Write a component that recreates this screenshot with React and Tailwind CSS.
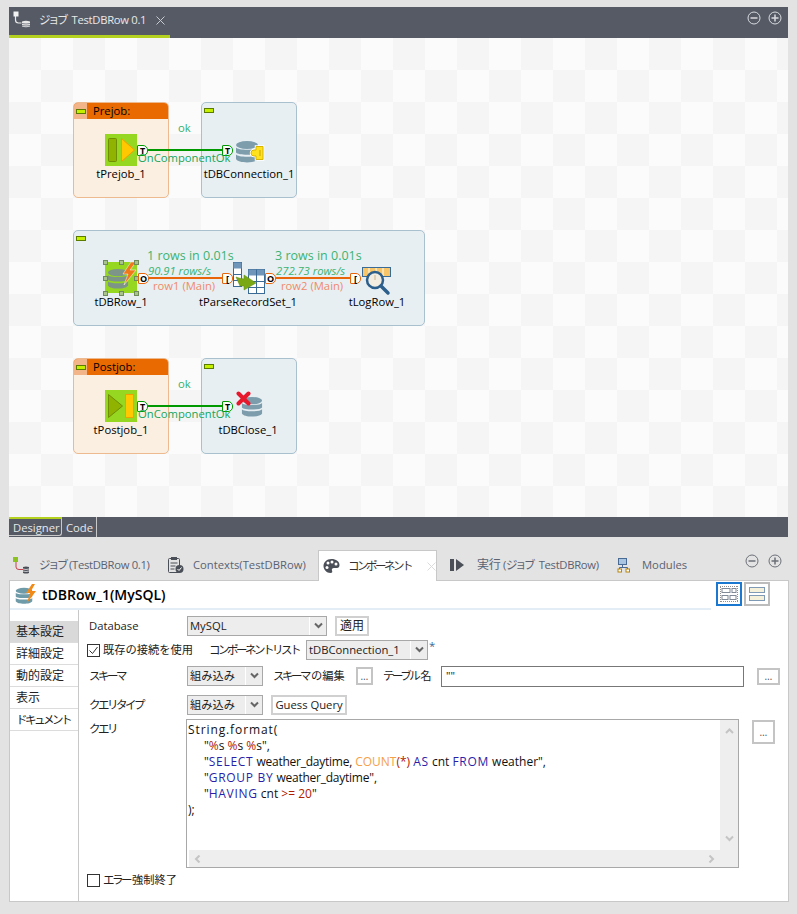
const sans = 'font-["Open_Sans","Noto_Sans_CJK_JP",sans-serif]';

// Meiryo UI kana are condensed; Noto needs tightening to take the same width
function Kana({ children }) {
  return <span className="text-[11.5px] tracking-[-2.5px] mr-[2px]">{children}</span>;
}

function KanaTight({ children }) {
  return <span className="text-[11.5px] tracking-[-2.5px] mr-[3px]">{children}</span>;
}

function JobIcon() {
  return (
    <svg width="18" height="18" viewBox="0 0 18 18" className="block">
      <path d="M2.500 4v5q0 3 3 3h3" fill="none" stroke="#e8e8e8" strokeWidth="1.200" />
      <rect x=".5" y=".5" width="5" height="5" fill="#f2f2f2" />
      <path d="M9 10.500q4-1.500 8 0v5q-4 1.500-8 0z" fill="#e8e8e8" />
      <path d="M9 12.500q4 1 8 0M9 14.500q4 1 8 0" fill="none" stroke="#555a65" strokeWidth=".7" />
    </svg>
  );
}

function JobIconLight() {
  return (
    <svg width="17" height="17" viewBox="0 0 17 17" className="block">
      <path d="M3 4v6q0 2.500 3 2.500h4" fill="none" stroke="#c9414f" strokeWidth="1" />
      <rect x="0" y="0" width="5" height="5" fill="#8cc21f" />
      <path d="M10 10q3-1 6 0v6q-3 1-6 0z" fill="#4b4f57" />
      <path d="M10 12q3 1 6 0M10 14q3 1 6 0" fill="none" stroke="#fff" strokeWidth=".7" />
    </svg>
  );
}

function CircleBtn({ plus, dark }) {
  const c = dark ? '#d8dade' : '#6b7078';
  return (
    <svg width="14" height="14" viewBox="0 0 14 14" className="block">
      <circle cx="7" cy="7" r="6" fill="none" stroke={c} />
      <path d={plus ? 'M3.500 7h7M7 3.500v7' : 'M3.500 7h7'} stroke={c} strokeWidth="1.500" />
    </svg>
  );
}

function Chevron({ color = '#666666', dir = 'down' }) {
  const d = { down: 'M1 1.500l3.500 3.500 3.500-3.500', up: 'M1 5l3.500-3.500 3.500 3.500', left: 'M5.500 .5l-3.500 3.500 3.500 3.500', right: 'M2.500 .5l3.500 3.500-3.500 3.500' }[dir];
  return (
    <svg width="9" height="8" viewBox="0 0 9 8" className="block">
      <path d={d} fill="none" stroke={color} strokeWidth="2" />
    </svg>
  );
}

function Collapse() {
  return <div className="w-[10px] h-[5px] bg-[#c4f000] border border-[#5b7a00]" />;
}

function Subjob({ cls, title }) {
  return (
    <div className={`absolute w-[96px] h-[96px] rounded-[5px] border border-[#edb98e] bg-[#fbeee0]/95 overflow-hidden ${cls}`}>
      <div className="flex h-[16px] bg-[#e86a00]">
        <div className="w-[13px] bg-[#f2b58a] flex items-center justify-center"><Collapse /></div>
        <span className="pl-[6px] text-[11.25px] leading-[15px] text-black">{title}</span>
      </div>
    </div>
  );
}

function Plain({ cls }) {
  return (
    <div className={`absolute rounded-[5px] border border-[#a9c1ce] bg-[#e6eef2]/95 pl-[2px] pt-[5px] ${cls}`}>
      <Collapse />
    </div>
  );
}

function Port({ cls, kind, color }) {
  const glyph = kind === 'T' ? 'T' : kind === 'O' ? 'O' : '[';
  return (
    <div className={`absolute w-[11px] h-[11px] bg-white border rounded-r-[5px] rounded-l-[1px] flex items-center justify-center text-[9px] leading-none font-bold text-black ${color} ${cls}`}>
      {glyph}
    </div>
  );
}

function Db({ size = 24, color = '#7d9dad' }) {
  return (
    <svg width={size} height={size} viewBox="0 0 24 24" className="block">
      <ellipse cx="12" cy="5" rx="11" ry="4" fill={color} />
      <path d="M1 7.500c2 3 20 3 22 0v5c-2 3-20 3-22 0z" fill={color} />
      <path d="M1 14.500c2 3 20 3 22 0V19c-2 4.500-20 4.500-22 0z" fill={color} />
    </svg>
  );
}

function Handle({ cls }) {
  return <div className={`absolute w-[5px] h-[5px] bg-[#a8c48c] border border-[#6f8a5c] ${cls}`} />;
}

function Canvas() {
  return (
    <div className={`relative flex-1 overflow-hidden bg-[conic-gradient(#f5f5f5_25%,#fbfbfb_0_50%,#f5f5f5_0_75%,#fbfbfb_0)] bg-[length:64px_64px] bg-[position:-32px_0] text-[11.25px] leading-[16px] ${sans}`}>
      {/* prejob */}
      <Subjob cls="left-[64px] top-[64px]" title="Prejob:" />
      <Plain cls="left-[192px] top-[64px] w-[96px] h-[96px]" />
      <div className="absolute left-[96px] top-[96px] w-[32px] h-[32px] bg-[#96d722]">
        <svg width="32" height="32" viewBox="0 0 32 32" className="block">
          <rect x="3.500" y="4.500" width="8" height="23" rx="1" fill="#8fb300" stroke="#6f8f00" />
          <path d="M16.500 4.500v23L29.500 16z" fill="#ffc800" stroke="#f0a000" />
        </svg>
      </div>
      <div className="absolute left-[139px] top-[111px] w-[75px] h-[2px] bg-[#009a00]" />
      <Port cls="left-[128px] top-[107px]" kind="T" color="border-[#009a00]" />
      <Port cls="left-[213px] top-[107px]" kind="T" color="border-[#009a00]" />
      <div className="absolute left-[226px] top-[102px]"><Db /></div>
      <svg width="18" height="16" viewBox="0 0 18 16" className="absolute left-[238px] top-[107px]">
        <path d="M7 5h2V1.500h7V14.500H9V11H7a3 3 0 0 1 0-6z" fill="#ffe11e" stroke="#fff" strokeWidth="2.500" />
        <path d="M7 5h2V1.500h7V14.500H9V11H7a3 3 0 0 1 0-6z" fill="#ffe11e" stroke="#d8b400" />
        <path d="M13 5v6" stroke="#c9a400" />
      </svg>
      <span className="absolute left-[169px] top-[82px] text-[#35b06b]">ok</span>
      <span className="absolute left-[129px] top-[112px] text-[#16a55a]">OnComponentOk</span>
      <span className="absolute left-[82px] top-[128px] w-[60px] text-center text-black">tPrejob_1</span>
      <span className="absolute left-[190px] top-[128px] w-[100px] text-center text-black">tDBConnection_1</span>

      {/* main subjob */}
      <Plain cls="left-[64px] top-[192px] w-[352px] h-[96px]" />
      <div className="absolute left-[96px] top-[224px] w-[32px] h-[31px] bg-[#96d722]" />
      <div className="absolute left-[98px] top-[230px]"><Db size={22} color="#7d9588" /></div>
      <svg width="16" height="24" viewBox="0 0 16 24" className="absolute left-[113px] top-[224px]">
        <path d="M9 0L1 12h5l-4 11 12-15H8l6-8z" fill="#f07818" stroke="#fff" strokeWidth=".5" />
      </svg>
      <Handle cls="left-[94px] top-[222px]" />
      <Handle cls="left-[110px] top-[222px]" />
      <Handle cls="left-[125px] top-[222px]" />
      <Handle cls="left-[94px] top-[238px]" />
      <Handle cls="left-[125px] top-[238px]" />
      <Handle cls="left-[94px] top-[253px]" />
      <Handle cls="left-[110px] top-[253px]" />
      <Handle cls="left-[125px] top-[253px]" />
      <div className="absolute left-[140px] top-[239px] w-[74px] h-[2px] bg-[#e8650a]" />
      <div className="absolute left-[267px] top-[239px] w-[74px] h-[2px] bg-[#e8650a]" />
      <Port cls="left-[129px] top-[235px]" kind="O" color="border-[#e8650a]" />
      <Port cls="left-[213px] top-[235px]" kind="[" color="border-[#e8650a]" />
      <Port cls="left-[256px] top-[235px]" kind="O" color="border-[#e8650a]" />
      <Port cls="left-[341px] top-[235px]" kind="[" color="border-[#e8650a]" />
      <svg width="34" height="34" viewBox="0 0 34 34" className="absolute left-[224px] top-[224px]">
        <rect x=".5" y=".5" width="8" height="24" fill="#fff" stroke="#3a6a96" />
        <rect x=".5" y=".5" width="8" height="6" fill="#6f96b8" />
        <path d="M.5 12.500h8M.5 18.500h8" stroke="#3a6a96" />
        <rect x="15.500" y="7.500" width="16" height="24" fill="#fff" stroke="#3a6a96" />
        <rect x="15.500" y="7.500" width="16" height="6" fill="#6f96b8" />
        <path d="M15.500 19.500h16M15.500 25.500h16M23.500 7.500v24" stroke="#3a6a96" />
        <path d="M3 15l3 1 5 1v-4l12 8-12 7v-4H7z" fill="#7aa815" stroke="#5d8a10" strokeWidth=".5" />
      </svg>
      <svg width="32" height="30" viewBox="0 0 32 30" className="absolute left-[353px] top-[229px]">
        <rect x=".5" y=".5" width="28" height="9" fill="#f8c668" stroke="#3a6a96" />
        <path d="M7 1v8M14 1v8M21 1v8" stroke="#fff" />
        <circle cx="13" cy="13" r="8" fill="#f3ece0" stroke="#2c5f8c" strokeWidth="2.500" />
        <path d="M13 8v5" stroke="#d9c8a8" strokeWidth="1.500" />
        <path d="M19 19l7 7" stroke="#2c5f8c" strokeWidth="3.500" strokeLinecap="round" />
      </svg>
      <span className="absolute left-[138px] top-[210px] text-[12.5px] text-[#3cb371]">1 rows in 0.01s</span>
      <span className="absolute left-[139px] top-[225px] italic text-[#3cb371]">90.91 rows/s</span>
      <span className="absolute left-[144px] top-[240px] text-[#f08a6a]">row1 (Main)</span>
      <span className="absolute left-[266px] top-[210px] text-[12.5px] text-[#3cb371]">3 rows in 0.01s</span>
      <span className="absolute left-[267px] top-[225px] italic text-[#3cb371]">272.73 rows/s</span>
      <span className="absolute left-[272px] top-[240px] text-[#f08a6a]">row2 (Main)</span>
      <span className="absolute left-[82px] top-[256px] w-[60px] text-center text-black">tDBRow_1</span>
      <span className="absolute left-[179px] top-[256px] w-[120px] text-center text-black">tParseRecordSet_1</span>
      <span className="absolute left-[328px] top-[256px] w-[80px] text-center text-black">tLogRow_1</span>

      {/* postjob */}
      <Subjob cls="left-[64px] top-[320px]" title="Postjob:" />
      <Plain cls="left-[192px] top-[320px] w-[96px] h-[96px]" />
      <div className="absolute left-[96px] top-[352px] w-[32px] h-[32px] bg-[#96d722]">
        <svg width="32" height="32" viewBox="0 0 32 32" className="block">
          <path d="M3.500 4.500v23L17.500 16z" fill="#8fb300" stroke="#6f8f00" />
          <rect x="20.500" y="4.500" width="8" height="23" fill="#ffc800" stroke="#f0a000" />
        </svg>
      </div>
      <div className="absolute left-[139px] top-[367px] w-[75px] h-[2px] bg-[#009a00]" />
      <Port cls="left-[128px] top-[363px]" kind="T" color="border-[#009a00]" />
      <Port cls="left-[213px] top-[363px]" kind="T" color="border-[#009a00]" />
      <div className="absolute left-[232px] top-[358px]"><Db size={22} /></div>
      <svg width="15" height="15" viewBox="0 0 15 15" className="absolute left-[227px] top-[353px]">
        <path d="M2.500 2.500l10 10M12.500 2.500l-10 10" stroke="#e8182c" strokeWidth="4" strokeLinecap="round" />
      </svg>
      <span className="absolute left-[169px] top-[338px] text-[#35b06b]">ok</span>
      <span className="absolute left-[129px] top-[368px] text-[#16a55a]">OnComponentOk</span>
      <span className="absolute left-[82px] top-[384px] w-[60px] text-center text-black">tPostjob_1</span>
      <span className="absolute left-[199px] top-[384px] w-[80px] text-center text-black">tDBClose_1</span>
    </div>
  );
}

function EditorPane() {
  return (
    <div className={`ml-[9px] mt-[7px] w-[779px] h-[530px] flex flex-col whitespace-nowrap ${sans}`}>
      <div className="h-[31px] bg-[#555a65] flex items-start relative">
        <div className="w-[161px] h-[31px] border-b-[3px] border-[#b5d11f] flex items-center pl-[4px] pb-[2px]">
          <JobIcon />
          <span className="ml-[8px] text-[11.25px] tracking-[-0.3px] text-[#e8e8e8]"><KanaTight>ジョブ</KanaTight> TestDBRow 0.1</span>
          <svg width="9" height="9" viewBox="0 0 9 9" className="ml-[10px]">
            <path d="M.5 .5l8 8M8.500 .5l-8 8" stroke="#c8cad0" />
          </svg>
        </div>
        <div className="ml-auto flex gap-[7px] pt-[4px] pr-[6px]">
          <CircleBtn dark />
          <CircleBtn plus dark />
        </div>
      </div>
      <Canvas />
      <div className="h-[20px] bg-[#555a65] flex text-[11.25px] leading-[17px] text-[#e8e8e8]">
        <div className="w-[53px] h-[19px] border-t-2 border-[#b5d11f] border-r border-b border-r-[#c8c8c8] border-b-[#c8c8c8] rounded-br-[3px] pl-[4px]">Designer</div>
        <div className="w-[35px] h-[20px] border-r border-[#c8c8c8] pl-[4px] pt-[2px]">Code</div>
      </div>
    </div>
  );
}

function Tab({ icon, children, cls }) {
  return (
    <div className={`flex items-center h-[31px] border-b border-[#c8c8c8] text-[#5a6272] text-[11.25px] ${cls}`}>
      {icon}
      <span>{children}</span>
    </div>
  );
}

function Select({ width, children }) {
  return (
    <div className={`flex h-[20px] border border-[#a8a8a8] bg-[#ededed] text-[11.25px] leading-[17px] text-[#222] ${width}`}>
      <span className="flex-1 pl-[2px] whitespace-nowrap overflow-hidden">{children}</span>
      <span className="w-[17px] border-l border-white flex items-center justify-center"><Chevron /></span>
    </div>
  );
}

function Dots({ cls }) {
  return (
    <div className={`border-2 border-[#c4c4c4] bg-white flex items-center justify-center text-[10px] leading-none text-[#555] ${cls}`}>…</div>
  );
}

function PlainBtn({ children, cls }) {
  return <div className={`h-[20px] border-2 border-[#d0d0d0] bg-white flex items-center justify-center text-[11.25px] text-[#222] ${cls}`}>{children}</div>;
}

function Query() {
  const kw = 'tracking-[0.7px] text-[#2a1fa8]';
  const red = 'text-[#b02000]';
  return (
    <div className="relative ml-[-1px] w-[553px] h-[149px] border border-[#a8a8a8] bg-white">
      <div className="pl-[1px] pt-[2px] text-[12px] leading-[16px] text-[#111] whitespace-pre">
        <div className="tracking-[0.9px]">String.format(</div>
        <div className="pl-[16px]">"<span className={red}>%</span>s <span className={red}>%</span>s <span className={red}>%</span>s",</div>
        <div className="pl-[16px]">"<span className={kw}>SELECT</span> <span className="tracking-[-0.25px]">weather_daytime,</span> <span className="text-[#f5a04a]">COUNT</span><span className={red}>(*)</span> <span className={kw}>AS</span> cnt <span className={kw}>FROM</span> weather",</div>
        <div className="pl-[16px]">"<span className={kw}>GROUP BY</span> <span className="tracking-[-0.25px]">weather_daytime</span>",</div>
        <div className="pl-[16px]">"<span className={kw}>HAVING</span> cnt <span className={red}>&gt;= 20</span>"</div>
        <div>);</div>
      </div>
      <div className="absolute right-0 top-0 bottom-0 w-[18px] bg-[#eeeeee] flex flex-col items-center justify-between pt-[8px] pb-[24px]">
        <Chevron color="#c4c4c4" dir="up" />
        <Chevron color="#c4c4c4" />
      </div>
      <div className="absolute left-[2px] right-0 bottom-0 h-[17px] bg-[#eeeeee] flex items-center justify-between pl-[5px] pr-[22px]">
        <Chevron color="#c4c4c4" dir="left" />
        <Chevron color="#c4c4c4" dir="right" />
      </div>
    </div>
  );
}

function Check({ on }) {
  return (
    <div className="w-[13px] h-[13px] border border-[#333] bg-white flex items-center justify-center">
      {on && (
        <svg width="11" height="11" viewBox="0 0 11 11">
          <path d="M1.500 5.500l3 3 5-6.500" fill="none" stroke="#333" strokeWidth="1" />
        </svg>
      )}
    </div>
  );
}

function ComponentPane() {
  const side = [
    { key: 'basic', label: '基本設定', active: true },
    { key: 'detail', label: '詳細設定' },
    { key: 'dynamic', label: '動的設定' },
    { key: 'view', label: '表示' },
    { key: 'doc', label: <Kana>ドキュメント</Kana> },
  ];
  return (
    <div className={`ml-[9px] mt-[13px] w-[780px] h-[352px] flex flex-col whitespace-nowrap ${sans}`}>
      <div className="relative h-[31px] flex items-end">
        <Tab cls="w-[158px] pl-[4px] tracking-[-0.3px]" icon={<span className="mr-[9px]"><JobIconLight /></span>}>
          <KanaTight>ジョブ</KanaTight>(TestDBRow 0.1)
        </Tab>
        <Tab
          cls="w-[151px]"
          icon={
            <svg width="17" height="18" viewBox="0 0 17 18" className="mr-[9px]">
              <rect x="1.500" y="2.500" width="11" height="14" rx="1" fill="none" stroke="#4b4f57" />
              <rect x="4" y="1" width="6" height="3" fill="#4b4f57" />
              <path d="M3.500 7h7M3.500 10h5M3.500 13h4" stroke="#4b4f57" />
              <circle cx="12.500" cy="13" r="4" fill="#4b4f57" />
              <path d="M10.500 13l1.500 1.500 2.500-3" fill="none" stroke="#fff" />
            </svg>
          }
        >
          Contexts(TestDBRow)
        </Tab>
        <div className="w-[119px] h-[31px] bg-white border border-[#c8c8c8] border-b-0 flex items-center pl-[4px] text-[#333] relative z-10">
          <svg width="17" height="16" viewBox="0 0 17 16" className="mr-[8px]">
            <path d="M8.500 1C3.500 1 .5 4.500 .5 8s3 7 7 7c2 0 2-1.500 1.500-2.500s0-2.500 2-2.500h3c1.500 0 2.500-1 2.500-3C16.500 3.500 13 1 8.500 1z" fill="#4b4f57" />
            <circle cx="5" cy="5" r="1.500" fill="#fff" /><circle cx="9" cy="4" r="1.500" fill="#fff" /><circle cx="13" cy="6" r="1.500" fill="#fff" /><circle cx="4" cy="9.500" r="1.500" fill="#fff" />
          </svg>
          <Kana>コンポーネント</Kana>
          <svg width="9" height="9" viewBox="0 0 9 9" className="ml-[14px]">
            <path d="M.5 .5l8 8M8.500 .5l-8 8" stroke="#dcdcdc" />
          </svg>
        </div>
        <Tab
          cls="w-[167px] pl-[13px] tracking-[-0.3px]"
          icon={
            <svg width="15" height="12" viewBox="0 0 15 12" className="mr-[12px]">
              <rect x="0" y="0" width="4" height="12" fill="#4b4f57" /><path d="M6 0l8 6-8 6z" fill="#4b4f57" />
            </svg>
          }
        >
          <span className="text-[12px]">実行</span> (<KanaTight>ジョブ</KanaTight> TestDBRow)
        </Tab>
        <Tab
          cls="flex-1 pl-[13px]"
          icon={
            <svg width="14" height="15" viewBox="0 0 14 15" className="mr-[11px]">
              <rect x="1.500" y=".5" width="8" height="6" fill="#a8c4e0" stroke="#4a6a96" />
              <path d="M5.500 6.500v3M2.500 11V9.500h8V11" fill="none" stroke="#4a6a96" />
              <rect x="1" y="11" width="3.500" height="3" fill="#fff" stroke="#b8860b" /><rect x="9" y="11" width="3.500" height="3" fill="#fff" stroke="#b8860b" />
            </svg>
          }
        >
          Modules
        </Tab>
        <div className="absolute right-[7px] top-[4px] flex gap-[9px]">
          <CircleBtn />
          <CircleBtn plus />
        </div>
      </div>
      <div className="flex-1 bg-white border-r border-b border-l border-[#c8c8c8] flex flex-col relative">
        <div className="flex h-[29px] items-start">
          <div className="w-[701px] h-[29px] border-b-2 border-[#e2edf5] flex items-center pl-[5px]">
            <span className="relative w-[24px] h-[22px] block">
              <span className="absolute left-0 top-[3px]"><Db size={18} color="#6f9aa8" /></span>
              <svg width="12" height="20" viewBox="0 0 12 20" className="absolute left-[10px] top-0">
                <path d="M7 0L1 9h4l-3 10 9-12H6l4-7z" fill="#f08a18" />
              </svg>
            </span>
            <span className="ml-[3px] text-[14px] font-semibold text-black">tDBRow_1(MySQL)</span>
          </div>
          <div className="ml-[5px] mt-[1px] w-[26px] h-[24px] border-2 border-[#1a78d0] bg-white p-[2px]">
            <svg width="18" height="16" viewBox="0 0 18 16" className="block">
              <rect width="18" height="16" fill="none" stroke="#222" strokeDasharray="1 1" />
              <rect x="2" y="2.500" width="8" height="4" fill="#fff" stroke="#7f8a96" /><rect x="12" y="2.500" width="4" height="4" fill="#fff" stroke="#7f8a96" />
              <rect x="2" y="9.500" width="6" height="4" fill="#fff" stroke="#7f8a96" /><rect x="10" y="9.500" width="6" height="4" fill="#fff" stroke="#7f8a96" />
            </svg>
          </div>
          <div className="ml-[2px] mt-[1px] w-[26px] h-[24px] border-2 border-[#bcbcbc] bg-white flex items-center justify-center">
            <svg width="16" height="15" viewBox="0 0 16 15" className="block">
              <rect x=".5" y=".5" width="15" height="5" fill="#f5f0da" stroke="#7f9ab4" /><rect x=".5" y="8.500" width="15" height="5" fill="#f5f0da" stroke="#7f9ab4" />
            </svg>
          </div>
        </div>
        <div className="flex flex-1">
          <div className="w-[69px] border-r border-[#c8c8c8] pt-[11px] text-[12px] text-[#222]">
            {side.map((s) => (
              <div key={s.key} className={`h-[22px] leading-[21px] pl-[6px] border-b border-[#dcdcdc] ${s.active ? 'bg-[#d9d9d9]' : ''}`}>{s.label}</div>
            ))}
          </div>
          <div className="flex-1 pl-[10px] pt-[6px] text-[11.25px] leading-[16px] text-[#222]">
            <div className="flex items-center h-[20px]">
              <span className="w-[98px]">Database</span>
              <Select width="w-[140px]">MySQL</Select>
              <PlainBtn cls="ml-[8px] w-[34px]"><span className="text-[12px]">適用</span></PlainBtn>
            </div>
            <div className="flex items-center h-[22px] mt-[3px] ml-[-2px]">
              <Check on />
              <span className="ml-[3px] w-[106px] text-[11.25px]">既存の接続を使用</span>
              <span className="w-[97px]"><Kana>コンポーネントリスト</Kana></span>
              <Select width="w-[122px]">tDBConnection_1</Select>
              <span className="text-[#3a6a96] self-start leading-[14px] ml-[1px]">*</span>
            </div>
            <div className="flex items-center h-[22px] mt-[4px]">
              <span className="w-[98px]"><Kana>スキーマ</Kana></span>
              <Select width="w-[76px]">組み込み</Select>
              <span className="ml-[10px] w-[83px]"><Kana>スキーマ</Kana>の編集</span>
              <Dots cls="w-[17px] h-[18px]" />
              <span className="ml-[10px] w-[58px]"><Kana>テーブル</Kana>名</span>
              <div className="w-[303px] h-[21px] border border-[#777] pl-[4px] leading-[18px]">""</div>
              <Dots cls="ml-[13px] w-[23px] h-[17px]" />
            </div>
            <div className="flex items-center h-[22px] mt-[7px]">
              <span className="w-[98px]"><Kana>クエリタイプ</Kana></span>
              <Select width="w-[76px]">組み込み</Select>
              <PlainBtn cls="ml-[8px] w-[76px]">Guess Query</PlainBtn>
            </div>
            <div className="flex items-start mt-[3px]">
              <span className="w-[98px] pt-[2px]"><Kana>クエリ</Kana></span>
              <Query />
              <Dots cls="ml-[13px] mt-[1px] w-[23px] h-[24px]" />
            </div>
            <div className="flex items-center h-[14px] mt-[5px] ml-[-2px]">
              <Check />
              <span className="ml-[3px]"><Kana>エラー</Kana>強制終了</span>
            </div>
          </div>
        </div>
      </div>
    </div>
  );
}

export default function App() {
  return (
    <div className="w-[797px] h-[914px] overflow-hidden bg-[#e3e3e3] flow-root">
      <EditorPane />
      <ComponentPane />
    </div>
  );
}
